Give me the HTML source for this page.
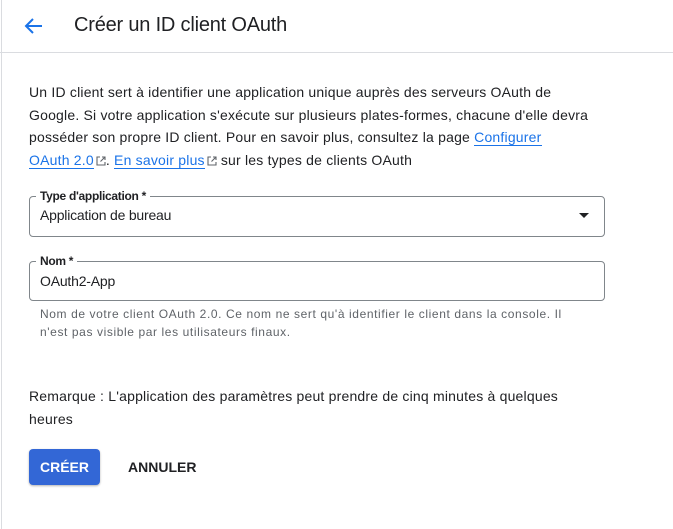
<!DOCTYPE html>
<html><head><meta charset="utf-8"><style>
*{margin:0;padding:0;box-sizing:border-box}
body{width:673px;height:529px;background:#fff;font-family:"Liberation Sans",Arial,sans-serif;color:#202124;position:relative;overflow:hidden}
.lb{position:absolute;left:1px;top:0;width:1px;height:529px;background:#dadce0}
.hdr{position:absolute;left:0;top:0;width:673px;height:53px;border-bottom:1px solid #dadce0}
.title{position:absolute;left:74px;top:14px;font-size:20px;letter-spacing:-0.2px;color:#202124}
.arrow{position:absolute;left:22px;top:16px}
.p{position:absolute;left:29px;top:81px;width:600px;font-size:14px;line-height:22.5px;letter-spacing:0.2px;white-space:nowrap}
a{color:#1a73e8;text-decoration:none;border-bottom:1px solid #1a73e8}
.ext{display:inline-block;width:10px;height:10px;vertical-align:-1px;margin-left:2px}
.field{position:absolute;left:29px;width:576px;border:1px solid #80868b;border-radius:4px}
.lab{position:absolute;left:6px;top:-8px;background:#fff;padding:0 4px;font-size:12px;font-weight:bold;letter-spacing:-0.3px;color:#202124;line-height:14px}
.val{position:absolute;left:10px;font-size:14px;letter-spacing:-0.2px}
.hint{position:absolute;left:40px;top:305px;font-size:12px;line-height:18px;color:#5f6368;letter-spacing:0.6px;white-space:nowrap}
.rem{position:absolute;left:29px;top:385px;font-size:14px;line-height:23px;letter-spacing:0.2px;white-space:nowrap}
.btn{position:absolute;left:29px;top:449px;width:71px;height:36px;background:#3367d6;border-radius:4px;color:#fff;font-weight:bold;font-size:14px;text-align:center;line-height:36px;box-shadow:0 1px 2px rgba(0,0,0,.3)}
.cancel{position:absolute;left:128px;top:458px;font-size:14px;font-weight:bold;color:#202124;line-height:18px}
</style></head><body>
<div class="lb"></div>
<div class="hdr">
<svg class="arrow" width="22" height="20" viewBox="0 0 22 20"><path d="M20 10H4M11 3L4 10l7 7" fill="none" stroke="#1a73e8" stroke-width="2"/></svg>
<div class="title">Créer un ID client OAuth</div>
</div>
<div class="p">Un ID client sert à identifier une application unique auprès des serveurs OAuth de<br>Google. Si votre application s'exécute sur plusieurs plates-formes, chacune d'elle devra<br>posséder son propre ID client. Pour en savoir plus, consultez la page <a>Configurer</a><br><a>OAuth 2.0</a><svg class="ext" viewBox="0 0 10 10"><path d="M4 1H1v8h8V6M6 1h3v3M9 1L4.5 5.5" fill="none" stroke="#5f6368" stroke-width="1.1"/></svg>. <a>En savoir plus</a><svg class="ext" viewBox="0 0 10 10"><path d="M4 1H1v8h8V6M6 1h3v3M9 1L4.5 5.5" fill="none" stroke="#5f6368" stroke-width="1.1"/></svg> sur les types de clients OAuth</div>
<div class="field" style="top:196px;height:41px">
<div class="lab">Type d'application *</div>
<div class="val" style="top:10px">Application de bureau</div>
<svg style="position:absolute;left:548px;top:15px" width="12" height="8" viewBox="0 0 12 8"><path d="M1 1h10L6 6z" fill="#202124"/></svg>
</div>
<div class="field" style="top:261px;height:40px">
<div class="lab">Nom *</div>
<div class="val" style="top:11px">OAuth2-App</div>
</div>
<div class="hint">Nom de votre client OAuth 2.0. Ce nom ne sert qu'à identifier le client dans la console. Il<br>n'est pas visible par les utilisateurs finaux.</div>
<div class="rem">Remarque : L'application des paramètres peut prendre de cinq minutes à quelques<br>heures</div>
<div class="btn">CRÉER</div>
<div class="cancel">ANNULER</div>
</body></html>
